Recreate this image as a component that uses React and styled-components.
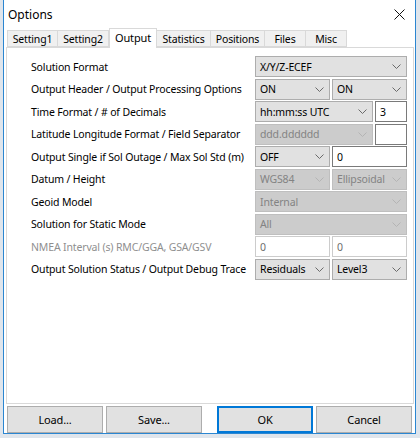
import styled, { createGlobalStyle } from "styled-components";

const GlobalStyle = createGlobalStyle`
    html, body {
        margin: 0;
        padding: 0;
        background: #dfe5ec;
    }
    body {
        width: 420px;
        height: 438px;
        overflow: hidden;
        font-family: 'Noto Sans', 'Open Sans', sans-serif;
        font-size: 10.5px;
        letter-spacing: -0.15px;
        color: #000;
    }
`;

const tabs = ["Setting1", "Setting2", "Output", "Statistics", "Positions", "Files", "Misc"];
const tabWidths = [51, 51, 48, 54, 54, 41, 41];

const rows = [
    { label: "Solution Format", controls: [{ kind: "combo", value: "X/Y/Z-ECEF", grow: 1 }] },
    {
        label: "Output Header / Output Processing Options",
        controls: [{ kind: "combo", value: "ON", w: 75 }, { kind: "combo", value: "ON", grow: 1 }],
    },
    {
        label: "Time Format / # of Decimals",
        controls: [{ kind: "combo", value: "hh:mm:ss UTC", grow: 1 }, { kind: "edit", value: "3", w: 32 }],
    },
    {
        label: "Latitude Longitude Format / Field Separator",
        controls: [
            { kind: "combo", value: "ddd.dddddd", grow: 1, disabled: true },
            { kind: "edit", value: "", w: 32 },
        ],
    },
    {
        label: "Output Single if Sol Outage / Max Sol Std (m)",
        controls: [{ kind: "combo", value: "OFF", w: 75 }, { kind: "edit", value: "0", grow: 1 }],
    },
    {
        label: "Datum / Height",
        controls: [
            { kind: "combo", value: "WGS84", w: 75, disabled: true },
            { kind: "combo", value: "Ellipsoidal", grow: 1, disabled: true },
        ],
    },
    { label: "Geoid Model", controls: [{ kind: "combo", value: "Internal", grow: 1, disabled: true }] },
    { label: "Solution for Static Mode", controls: [{ kind: "combo", value: "All", grow: 1, disabled: true }] },
    {
        label: "NMEA Interval (s) RMC/GGA, GSA/GSV",
        dim: true,
        controls: [
            { kind: "edit", value: "0", w: 75, soft: true },
            { kind: "edit", value: "0", grow: 1, soft: true },
        ],
    },
    {
        label: "Output Solution Status / Output Debug Trace",
        controls: [{ kind: "combo", value: "Residuals", w: 75 }, { kind: "combo", value: "Level3", grow: 1 }],
    },
];

const Chevron = ({ disabled }) => (
    <svg width="9" height="5" viewBox="0 0 9 5">
        <path d="M0.5 0.5 L4.5 4.5 L8.5 0.5" fill="none" stroke={disabled ? "#b4b4b4" : "#6a6a6a"} strokeWidth="1" />
    </svg>
);

export default function App() {
    return (
        <>
            <GlobalStyle />
            <Window>
                <TitleBar>
                    <span>Options</span>
                    <svg width="11" height="11" viewBox="0 0 11 11">
                        <path d="M0.5 0.5 L10.5 10.5 M10.5 0.5 L0.5 10.5" stroke="#111" strokeWidth="1" />
                    </svg>
                </TitleBar>
                <TabStrip>
                    {tabs.map((t, i) => (
                        <Tab key={t} $active={t === "Output"} $w={tabWidths[i]}>
                            {t}
                        </Tab>
                    ))}
                </TabStrip>
                <TabPage>
                    {rows.map(row => (
                        <Row key={row.label}>
                            <Label $dim={row.dim}>{row.label}</Label>
                            <Controls>
                                {row.controls.map((c, i) =>
                                    c.kind === "combo" ? (
                                        <Combo key={i} $w={c.w} $grow={c.grow} $disabled={c.disabled}>
                                            <span>{c.value}</span>
                                            <Chevron disabled={c.disabled} />
                                        </Combo>
                                    ) : (
                                        <Edit key={i} $w={c.w} $grow={c.grow} $soft={c.soft}>
                                            {c.value}
                                        </Edit>
                                    )
                                )}
                            </Controls>
                        </Row>
                    ))}
                </TabPage>
                <ButtonBar>
                    <Button>Load...</Button>
                    <Button>Save...</Button>
                    <Spacer />
                    <Button $default>OK</Button>
                    <Button>Cancel</Button>
                </ButtonBar>
            </Window>
        </>
    );
}

const Window = styled.div`
    box-sizing: border-box;
    margin-left: 3px;
    width: 413px;
    height: 434px;
    border: 1px solid #2b86d1;
    border-top: none;
    background: #fff;
    display: flex;
    flex-direction: column;
`;

const TitleBar = styled.div`
    height: 29px;
    display: flex;
    align-items: center;
    justify-content: space-between;
    padding: 0 10px 0 4px;
    font-size: 12px;
    letter-spacing: 0;
`;

const TabStrip = styled.div`
    display: flex;
    align-items: flex-end;
    height: 18px;
    margin-left: 3px;
    position: relative;
    z-index: 1;
`;

const Tab = styled.div`
    box-sizing: border-box;
    width: ${p => p.$w}px;
    height: ${p => (p.$active ? 20 : 17)}px;
    margin-bottom: ${p => (p.$active ? -1 : 0)}px;
    display: flex;
    align-items: center;
    justify-content: center;
    background: ${p => (p.$active ? "#fff" : "#f0f0f0")};
    border: 1px solid #d9d9d9;
    border-bottom: ${p => (p.$active ? "none" : "1px solid #d9d9d9")};
    border-left-width: ${p => (p.$active ? 1 : 0)}px;
    font-size: ${p => (p.$active ? 11 : 10.5)}px;
    padding-bottom: ${p => (p.$active ? 3 : 0)}px;
    &:first-child {
        border-left-width: 1px;
    }
`;

const TabPage = styled.div`
    box-sizing: border-box;
    margin: 0 0 0 2px;
    width: 408px;
    height: 357px;
    border: 1px solid #d9d9d9;
    padding: 8px 4px 0 24px;
    display: flex;
    flex-direction: column;
    gap: 1.5px;
`;

const Row = styled.div`
    display: flex;
    align-items: center;
    height: 21px;
`;

const Label = styled.div`
    width: 224px;
    white-space: nowrap;
    color: ${p => (p.$dim ? "#8f8f8f" : "#000")};
`;

const Controls = styled.div`
    width: 152px;
    display: flex;
    gap: 2px;
    height: 100%;
`;

const Combo = styled.div`
    box-sizing: border-box;
    width: ${p => (p.$w ? `${p.$w}px` : "auto")};
    flex: ${p => (p.$grow ? 1 : "none")};
    height: 21px;
    display: flex;
    align-items: center;
    justify-content: space-between;
    padding: 0 5px 0 4px;
    background: ${p => (p.$disabled ? "#cccccc" : "#e1e1e1")};
    border: 1px solid ${p => (p.$disabled ? "#bfbfbf" : "#adadad")};
    color: ${p => (p.$disabled ? "#838383" : "#000")};
`;

const Edit = styled.div`
    box-sizing: border-box;
    width: ${p => (p.$w ? `${p.$w}px` : "auto")};
    flex: ${p => (p.$grow ? 1 : "none")};
    height: 21px;
    display: flex;
    align-items: center;
    padding: 0 4px;
    background: #fff;
    border: 1px solid ${p => (p.$soft ? "#cccccc" : "#7a7a7a")};
    color: ${p => (p.$soft ? "#6d6d6d" : "#000")};
`;

const ButtonBar = styled.div`
    display: flex;
    gap: 3px;
    margin: 2px 0 0 3px;
    height: 27px;
`;

const Spacer = styled.div`
    width: 9px;
`;

const Button = styled.div`
    box-sizing: border-box;
    width: 96px;
    display: flex;
    align-items: center;
    justify-content: center;
    background: #e1e1e1;
    border: ${p => (p.$default ? "2px solid #0078d7" : "1px solid #adadad")};
    font-size: 11px;
`;
